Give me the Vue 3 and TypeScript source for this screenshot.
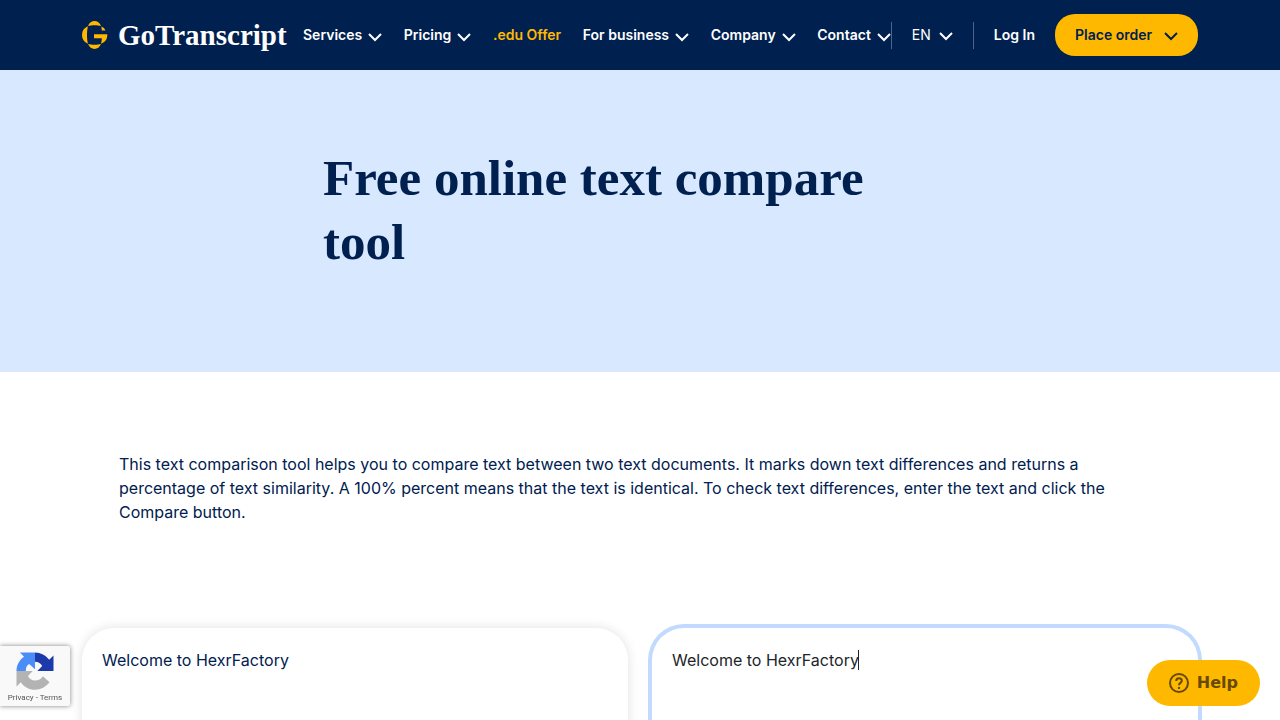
<script setup lang="ts">
import { computed, onMounted, ref } from 'vue'

interface NavItem {
  label: string
  menu: boolean
  accent?: boolean
}

const nav: NavItem[] = [
  { label: 'Services', menu: true },
  { label: 'Pricing', menu: true },
  { label: '.edu Offer', menu: false, accent: true },
  { label: 'For business', menu: true },
  { label: 'Company', menu: true },
  { label: 'Contact', menu: true },
]

const original = ref('Welcome to HexrFactory')
const changed = ref('Welcome to HexrFactory')
const textFont = ref('16px Inter')
const changedBox = ref<HTMLTextAreaElement | null>(null)

const caretOffset = computed(() => {
  const ctx = document.createElement('canvas').getContext('2d')
  if (!ctx) return 0
  ctx.font = textFont.value
  const lastLine = changed.value.split('\n').pop() ?? ''
  return Math.floor(ctx.measureText(lastLine).width)
})

onMounted(() => {
  if (changedBox.value) {
    const style = getComputedStyle(changedBox.value)
    textFont.value = `${style.fontWeight} ${style.fontSize} ${style.fontFamily}`
  }
})
</script>

<template>
  <div class="page">
    <header class="topbar">
      <div class="topbar-inner">
        <a class="brand" href="#">
          <svg class="brand-mark" viewBox="0 0 26 28" aria-hidden="true">
            <g fill="#ffb800">
              <path d="M6 4.900C7.300 1.700 9.700 0 12.500 0s5.200 1.700 6.500 4.900C17 4.400 15 4.200 12.500 4.200S8 4.400 6 4.900z" />
              <path d="M6 23.100C7.300 26.300 9.700 28 12.500 28s5.200-1.700 6.500-4.900c-2 .5-4 .7-6.500.7s-4.500-.2-6.500-.7z" />
              <path d="M6 5.300C2 6.800 0 9.800 0 14s2 7.200 6 8.700C5.300 20.200 5 17.500 5 14s.3-6.200 1-8.700z" />
              <path d="M19.300 5.500c2 .8 3.500 2.200 4.200 4h-3.700c-.1-1.500-.3-2.800-.5-4z" />
              <path d="M12 13.300H25.300c.2 4.700-2 8-6.300 9.400.5-1.700.8-3.400.9-5.400H12z" />
            </g>
          </svg>
          <span class="brand-name">GoTranscript</span>
        </a>
        <nav class="nav">
          <a v-for="item in nav" :key="item.label" href="#" class="nav-link" :class="{ accent: item.accent }">
            {{ item.label }}
            <svg v-if="item.menu" class="chevron" viewBox="0 0 14 10" aria-hidden="true"><path d="M1 2l6 6 6-6" /></svg>
          </a>
        </nav>
        <div class="account">
          <button type="button" class="lang">
            EN
            <svg class="chevron" viewBox="0 0 14 10" aria-hidden="true"><path d="M1 2l6 6 6-6" /></svg>
          </button>
          <a class="nav-link login" href="#">Log In</a>
          <button type="button" class="order">
            Place order
            <svg class="chevron" viewBox="0 0 14 10" aria-hidden="true"><path d="M1 2l6 6 6-6" /></svg>
          </button>
        </div>
      </div>
    </header>

    <section class="hero">
      <h1>Free online text compare tool</h1>
    </section>

    <main class="content">
      <p class="intro">
        This text comparison tool helps you to compare text between two text documents. It marks down text
        differences and returns a percentage of text similarity. A 100% percent means that the text is identical.
        To check text differences, enter the text and click the Compare button.
      </p>
      <div class="boxes">
        <div class="box">
          <textarea v-model="original" aria-label="Original text" spellcheck="false"></textarea>
        </div>
        <div class="box active">
          <textarea ref="changedBox" v-model="changed" aria-label="Changed text" spellcheck="false"></textarea>
          <span class="caret" :style="{ marginLeft: caretOffset + 'px' }"></span>
        </div>
      </div>
    </main>

    <aside class="captcha">
      <svg viewBox="0 0 38 38" aria-hidden="true">
        <path fill="#1c3aa9" d="M37.500 19V3.500l-4.300 4.300C29.800 3.500 24.700.5 19 .5v9.300c3.500 0 5.900 1.700 7.200 4.200L21.300 19z" />
        <path fill="#4a8df6" d="M19 .5H4l4 4.200C3.300 8 .5 13 .5 19h9.300c0-3.600 1.200-6 3.400-6.900l5.800 5.200z" />
        <path fill="#b3b3b3" d="M.5 19v15.500l4.300-4.300C8 34.800 13.300 37.800 19 37.800c6 0 11-3 14.500-7.500l-6.600-6.100c-1.800 2.900-4.500 4.300-7.900 4.300-3.200 0-5.700-1.600-7-4.500l4.700-5z" />
      </svg>
      <div class="captcha-links"><a href="#">Privacy</a> - <a href="#">Terms</a></div>
    </aside>

    <button type="button" class="help">
      <svg viewBox="0 0 20 20" aria-hidden="true">
        <circle cx="10" cy="10" r="9" />
        <path d="M7.200 8c0-1.700 1.200-2.700 2.800-2.700s2.800 1 2.800 2.500c0 2-2.800 2.200-2.800 4.400" />
        <circle class="dot" cx="10" cy="14.900" r="1.200" />
      </svg>
      Help
    </button>
  </div>
</template>

<style>
body {
  margin: 0;
}
</style>

<style scoped>
.page {
  height: 100vh;
  overflow: hidden;
  background: #fff;
  color: #002050;
  font-family: Inter, "Liberation Sans", sans-serif;
  font-size: 16px;
  font-weight: 400;
  line-height: 24px;
}

.page * {
  box-sizing: border-box;
}

a {
  color: inherit;
  text-decoration: none;
}

button {
  font: inherit;
  border: 0;
  cursor: pointer;
}

.topbar {
  background: #002050;
  color: #fff;
  padding: 0 24px;
}

.topbar-inner {
  display: flex;
  align-items: center;
  max-width: 1116px;
  height: 70px;
  margin: 0 auto;
  font-size: 14px;
  line-height: 20px;
}

.brand {
  display: flex;
  align-items: center;
  gap: 10px;
  flex: none;
  width: 204px;
  margin-right: 17px;
}

.brand-mark {
  flex: none;
  width: 26px;
  height: 28px;
}

.brand-name {
  font-family: "Liberation Serif", serif;
  font-size: 29px;
  font-weight: 700;
  line-height: 32px;
}

.nav {
  display: flex;
  flex: 1;
  justify-content: space-between;
}

.nav-link {
  display: flex;
  align-items: center;
  gap: 6px;
  font-weight: 600;
  white-space: nowrap;
}

.accent {
  color: #ffb800;
}

.chevron {
  width: 14px;
  height: 10px;
  margin-top: 3px;
  fill: none;
  stroke: currentColor;
  stroke-width: 2;
}

.account {
  display: flex;
  align-items: center;
  flex: none;
}

.account .chevron {
  margin-top: 1px;
}

.lang {
  display: flex;
  align-items: center;
  gap: 8px;
  height: 27px;
  padding: 0 20px;
  border-left: 1px solid #4d638a;
  border-right: 1px solid #4d638a;
  background: none;
  color: #fff;
}

.login {
  padding: 0 20px;
}

.order {
  display: flex;
  align-items: center;
  justify-content: space-between;
  min-width: 143px;
  height: 42px;
  padding: 0 20px;
  border-radius: 20px;
  background: #ffb800;
  color: #002050;
  font-weight: 600;
  white-space: nowrap;
}

.hero {
  padding: 76px 24px 98px;
  background: #d7e8ff;
}

h1 {
  max-width: 634px;
  margin: 0 auto;
  font-family: "Liberation Serif", serif;
  font-size: 51px;
  font-weight: 700;
  line-height: 64px;
}

.content {
  max-width: 1116px;
  margin: 0 auto;
  padding: 80px 24px 0;
  box-sizing: content-box;
}

.intro {
  margin: 0;
  padding: 0 37px;
}

.boxes {
  display: grid;
  grid-template-columns: 1fr 1fr;
  gap: 24px;
  margin-top: 104px;
}

.box {
  position: relative;
  border-radius: 32px;
  background: #fff;
  box-shadow: 0 0 12px rgba(0, 0, 0, 0.12);
}

.box.active {
  box-shadow: 0 0 0 4px #c2daff;
}

textarea {
  display: block;
  width: 100%;
  height: 300px;
  padding: 20px;
  border: 0;
  border-radius: 32px;
  outline: 0;
  background: none;
  color: #002050;
  font: inherit;
  resize: none;
}

.active textarea {
  color: #212529;
}

.caret {
  position: absolute;
  top: 22px;
  left: 20px;
  width: 1px;
  height: 20px;
  background: #212529;
}

.captcha {
  position: fixed;
  bottom: 14px;
  left: 0;
  display: flex;
  flex-direction: column;
  align-items: center;
  width: 70px;
  height: 60px;
  padding-top: 6px;
  border-radius: 0 2px 2px 0;
  background: #f9f9f9;
  box-shadow: 0 0 5px #808080;
  color: #555;
}

.captcha svg {
  width: 38px;
  height: 38px;
}

.captcha-links {
  font-family: Roboto, sans-serif;
  font-size: 8px;
  line-height: 15px;
  white-space: nowrap;
}

.help {
  position: fixed;
  right: 20px;
  bottom: 14px;
  display: flex;
  align-items: center;
  gap: 8px;
  height: 46px;
  padding: 0 22px;
  border-radius: 23px;
  background: #ffb800;
  color: #664a00;
  font-family: "DejaVu Sans", sans-serif;
  font-size: 16px;
  font-weight: 700;
}

.help svg {
  width: 20px;
  height: 20px;
  fill: none;
  stroke: currentColor;
  stroke-width: 2;
}

.help .dot {
  fill: currentColor;
  stroke: none;
}
</style>
